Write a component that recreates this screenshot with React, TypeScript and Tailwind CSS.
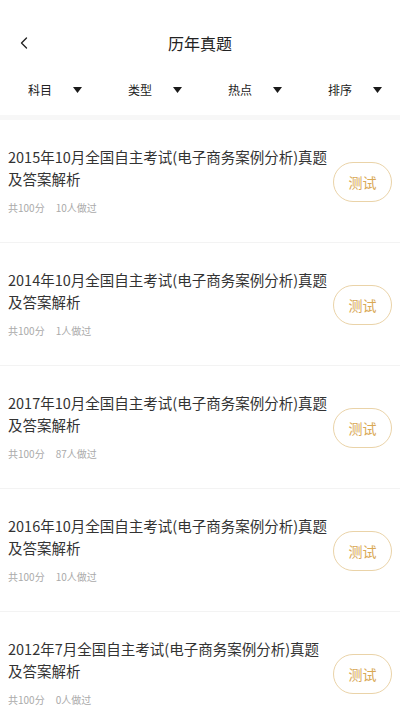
import { ChevronLeft } from "lucide-react";

const papers = [
  { title: "2015年10月全国自主考试(电子商务案例分析)真题及答案解析", done: 10 },
  { title: "2014年10月全国自主考试(电子商务案例分析)真题及答案解析", done: 1 },
  { title: "2017年10月全国自主考试(电子商务案例分析)真题及答案解析", done: 87 },
  { title: "2016年10月全国自主考试(电子商务案例分析)真题及答案解析", done: 10 },
  { title: "2012年7月全国自主考试(电子商务案例分析)真题及答案解析", done: 0 },
];

const filters = ["科目", "类型", "热点", "排序"];

function Caret() {
  return (
    <svg width="9" height="6" viewBox="0 0 9 6" className="fill-[#1a1a1a]">
      <path d="M0 0h9L4.5 6z" />
    </svg>
  );
}

export default function App() {
  return (
    <div
      className="w-[400px] h-[710px] overflow-hidden bg-white"
      style={{ fontFamily: '"Noto Sans CJK SC", "Noto Sans", sans-serif' }}
    >
      {/* Header */}
      <div className="relative h-[82px] pt-[25px]">
        <div className="flex h-9 items-center justify-center text-[16px] text-[#222]">
          历年真题
        </div>
        <ChevronLeft
          size={20}
          strokeWidth={1.6}
          className="absolute left-[14px] top-[33px] text-[#222]"
        />
      </div>

      {/* Filters */}
      <div className="grid h-[33px] grid-cols-4 items-start">
        {filters.map((f) => (
          <div key={f} className="flex h-4 items-center pl-[28px]">
            <span className="w-[45px] text-[12px] leading-4 text-[#222]">{f}</span>
            <Caret />
          </div>
        ))}
      </div>

      <div className="h-[5px] bg-[#f7f7f7]" />

      {/* List */}
      <div>
        {papers.map((p, i) => (
          <div
            key={i}
            className="flex h-[123px] items-center border-b border-[#f3f3f3] pl-2 pr-2"
          >
            <div className="w-[325px] shrink-0">
              <div className="text-[14.5px] leading-[22px] text-[#333]">{p.title}</div>
              <div className="mt-[10px] flex gap-[11px] text-[10px] leading-4 text-[#aaa]">
                <span>共100分</span>
                <span>{p.done}人做过</span>
              </div>
            </div>
            <button className="mt-[2px] flex h-[40px] w-[59px] shrink-0 items-center justify-center rounded-full border border-[#ead3a8] text-[14px] text-[#d9a855]">
              测试
            </button>
          </div>
        ))}
      </div>
    </div>
  );
}
